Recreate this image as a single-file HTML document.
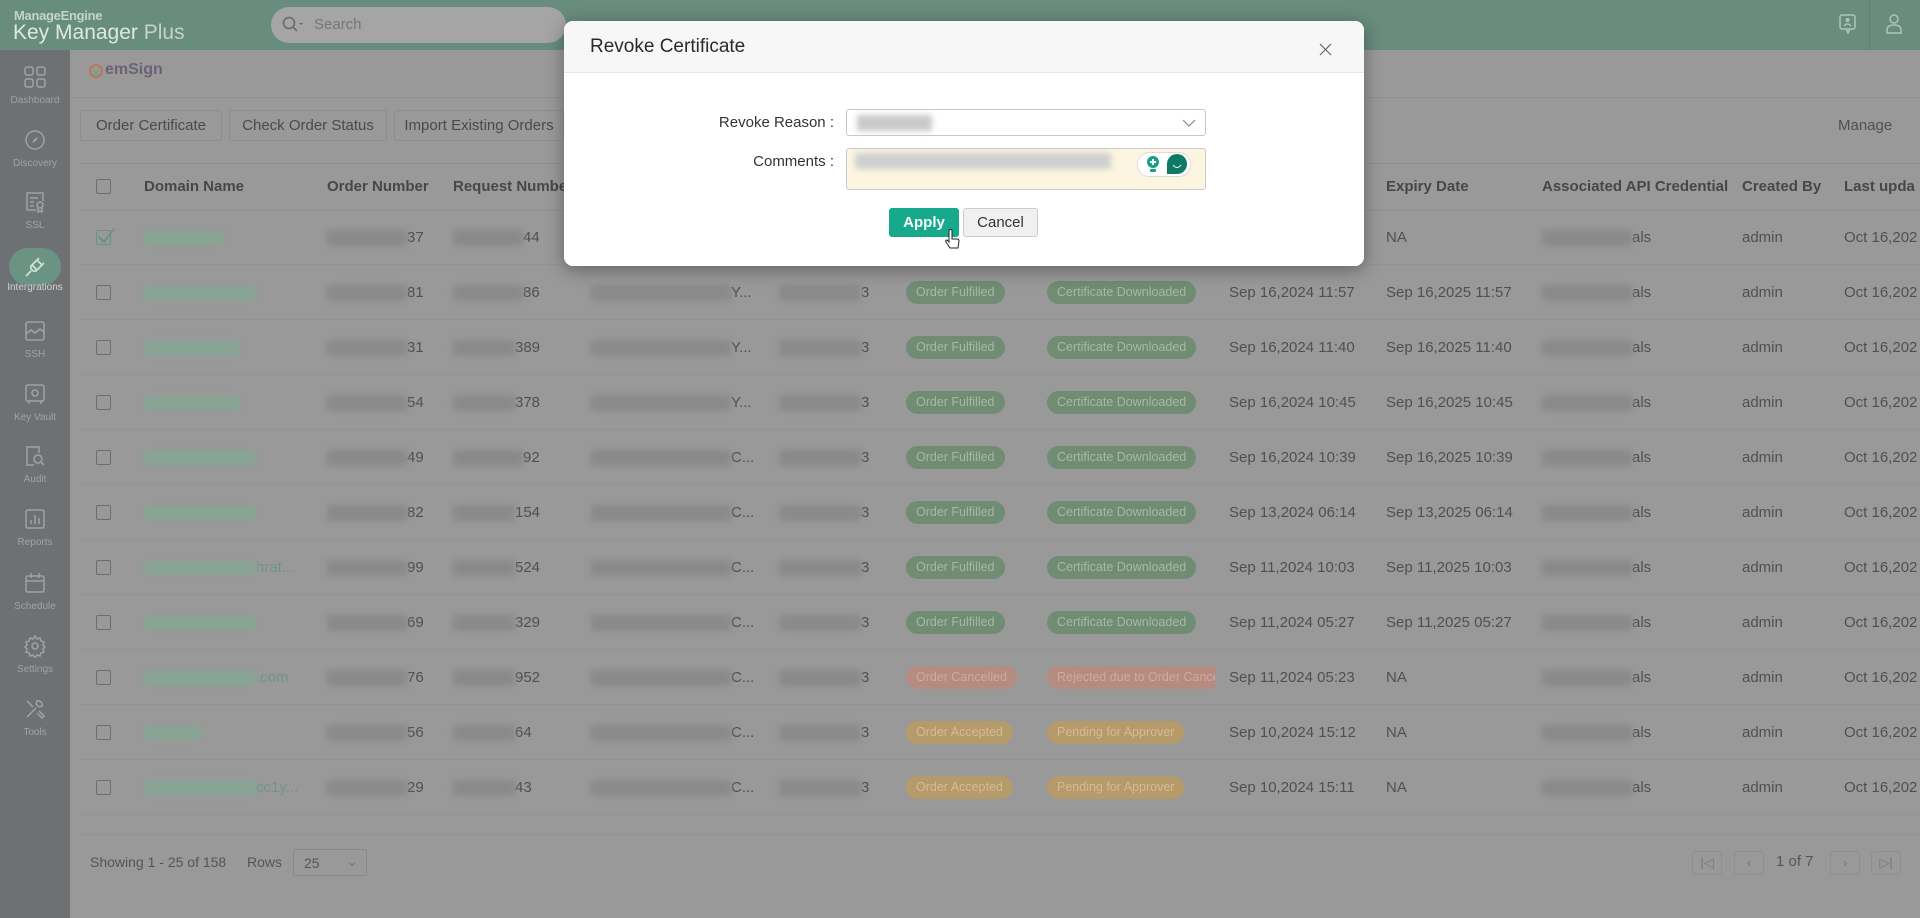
<!DOCTYPE html>
<html><head><meta charset="utf-8"><style>
*{margin:0;padding:0;box-sizing:border-box}
body{width:1920px;height:918px;overflow:hidden;background:#999;font-family:"Liberation Sans",sans-serif;position:relative;color:#505050}
.a{position:absolute}
#hdr{left:0;top:0;width:1920px;height:50px;background:#688c7e}
#side{left:0;top:50px;width:70px;height:868px;background:#6d7173}
.si{position:absolute;left:0;width:70px;text-align:center;font-size:10px;color:#9ea3a5}
.si svg{display:block;margin:0 auto 6px}
.btn{position:absolute;top:110px;height:31px;border:1px solid #8d8d8d;border-radius:3px;font-size:15px;color:#4a4a4a;line-height:29px;text-align:center}
.th{position:absolute;top:178px;font-size:15px;font-weight:bold;color:#474747}
.row{position:absolute;left:80px;width:1840px;height:55px;border-bottom:1px solid #939393}
.c{position:absolute;top:19px;font-size:15px;color:#505050;white-space:nowrap}
.bl{display:inline-block;height:16px;background:#8a8a8a;filter:blur(3px);vertical-align:middle}
.gl{display:inline-block;height:14px;background:#86a594;filter:blur(3px);vertical-align:middle}
.cb{position:absolute;left:16px;top:20px;width:15px;height:15px;border:1.5px solid #6d6d6d;border-radius:2px}
.bd{position:absolute;top:16px;height:23px;border-radius:12px;font-size:12.5px;line-height:23px;padding:0 10px;white-space:nowrap}
.g{background:#708c72;color:#a6b8a6}
.r{background:#b68b80;color:#d0aaa0}
.o{background:#b59a6a;color:#d3bd90}
</style></head><body>
<div id="hdr" class="a">
<div class="a" style="left:14px;top:8px;font-size:13px;font-weight:bold;color:#c4d3cc;letter-spacing:-0.3px">ManageEngine</div>
<div class="a" style="left:13px;top:21px;font-size:21px;color:#dfe8e4">Key Manager <span style="color:#c4d3cc">Plus</span></div>
<div class="a" style="left:271px;top:7px;width:295px;height:36px;border-radius:18px;background:#a5a5a5"></div>
<svg class="a" style="left:281px;top:15px" width="22" height="18"><circle cx="8" cy="8" r="5.5" fill="none" stroke="#666" stroke-width="1.5"/><path d="M12 12l4 4" stroke="#666" stroke-width="1.5"/><path d="M18 8l2 2 2-2z" fill="#666"/></svg>
<div class="a" style="left:314px;top:16px;font-size:15px;color:#767676">Search</div>
<svg class="a" style="left:1838px;top:13px" width="20" height="22"><rect x="2" y="2" width="15" height="14" rx="2" fill="none" stroke="#aec3ba" stroke-width="1.5"/><circle cx="9.5" cy="7" r="2" fill="#aec3ba"/><path d="M6 13q3.5-4 7 0M8 16l2 4 2-4" fill="none" stroke="#aec3ba" stroke-width="1.5"/></svg>
<div class="a" style="left:1869px;top:0;width:1px;height:50px;background:#627f73"></div>
<svg class="a" style="left:1885px;top:13px" width="18" height="22"><circle cx="9" cy="6" r="4" fill="none" stroke="#aec3ba" stroke-width="1.5"/><path d="M2 20v-3q0-5 7-5t7 5v3z" fill="none" stroke="#aec3ba" stroke-width="1.5"/></svg>
</div>
<div id="side" class="a">
<div class="si" style="top:15px"><svg width="24" height="24"><g fill="none" stroke="#9ea3a5" stroke-width="1.5"><rect x="2" y="2" width="8" height="8" rx="2"/><rect x="14" y="2" width="8" height="8" rx="2"/><rect x="2" y="14" width="8" height="8" rx="2"/><rect x="14" y="14" width="8" height="8" rx="2"/></g></svg>Dashboard</div>
<div class="si" style="top:78px"><svg width="24" height="24"><circle cx="12" cy="12" r="9" fill="none" stroke="#9ea3a5" stroke-width="1.5"/><path d="M15 9l-4 2-2 4 4-2z" fill="#9ea3a5"/></svg>Discovery</div>
<div class="si" style="top:140px"><svg width="24" height="24"><g fill="none" stroke="#9ea3a5" stroke-width="1.5"><path d="M13 20H4V3h16v8"/><path d="M7 8h8M7 12h4M7 16h4"/><circle cx="17" cy="15" r="3"/><path d="M15 18v4l2-1 2 1v-4"/></g></svg>SSL</div>
<div class="a" style="left:9px;top:198px;width:52px;height:37px;border-radius:19px;background:#6a9383"></div>
<svg class="a" style="left:23px;top:205px" width="24" height="24"><g fill="none" stroke="#cfe0d9" stroke-width="1.8"><path d="M3 21l5-5M9 10l5 5M14 5l2-2M19 10l2-2M8 11l6-6 5 5-6 6a4 4 0 01-5-5z"/></g></svg>
<div class="si" style="top:232px;color:#cdd3d4">Intergrations</div>
<div class="si" style="top:269px"><svg width="24" height="24"><g fill="none" stroke="#9ea3a5" stroke-width="1.5"><rect x="3" y="3" width="18" height="18" rx="2"/><path d="M3 15l5-4 4 3 5-4 4 3"/></g></svg>SSH</div>
<div class="si" style="top:332px"><svg width="24" height="24"><g fill="none" stroke="#9ea3a5" stroke-width="1.5"><rect x="3" y="3" width="18" height="16" rx="2"/><circle cx="12" cy="11" r="3"/><path d="M6 19v3M18 19v3"/></g></svg>Key Vault</div>
<div class="si" style="top:394px"><svg width="24" height="24"><g fill="none" stroke="#9ea3a5" stroke-width="1.5"><path d="M11 21H4V3h12v6"/><circle cx="15" cy="15" r="4"/><path d="M18 18l3 3"/></g></svg>Audit</div>
<div class="si" style="top:457px"><svg width="24" height="24"><g fill="none" stroke="#9ea3a5" stroke-width="1.5"><rect x="3" y="3" width="18" height="18" rx="2"/><path d="M8 17v-4M12 17V8M16 17v-6"/></g></svg>Reports</div>
<div class="si" style="top:521px"><svg width="24" height="24"><g fill="none" stroke="#9ea3a5" stroke-width="1.5"><rect x="3" y="5" width="18" height="16" rx="2"/><path d="M3 10h18M8 2v5M16 2v5"/></g></svg>Schedule</div>
<div class="si" style="top:584px"><svg width="24" height="24"><g fill="none" stroke="#9ea3a5" stroke-width="1.5"><circle cx="12" cy="12" r="3"/><path d="M12 2l2 3 3-1 1 3 3 1-1 3 2 2-2 2 1 3-3 1-1 3-3-1-2 3-2-3-3 1-1-3-3-1 1-3-2-2 2-2-1-3 3-1 1-3 3 1z"/></g></svg>Settings</div>
<div class="si" style="top:647px"><svg width="24" height="24"><g fill="none" stroke="#9ea3a5" stroke-width="1.5"><path d="M4 20l9-9M14 4a4 4 0 015 5l-3 1-3-3zM4 4l6 6M16 14l5 5-2 2-5-5"/></g></svg>Tools</div>
</div>
<svg class="a" style="left:89px;top:63px" width="14" height="16"><circle cx="7" cy="8" r="6" fill="none" stroke="#b07a5a" stroke-width="2"/><rect x="4" y="7" width="6" height="5" fill="#8a9a7a"/></svg>
<div class="a" style="left:105px;top:61px;font-size:16px;font-weight:bold;color:#6b6278">emSign</div>
<div class="a" style="left:70px;top:97px;width:1850px;height:1px;background:#909090"></div>
<div class="btn" style="left:80px;width:142px">Order Certificate</div>
<div class="btn" style="left:229px;width:158px">Check Order Status</div>
<div class="btn" style="left:394px;width:170px">Import Existing Orders</div>
<div class="a" style="left:1838px;top:117px;font-size:15px;color:#505050">Manage</div>
<div class="a" style="left:80px;top:163px;width:1840px;height:48px;border-top:1px solid #909090;border-bottom:1px solid #909090"></div>
<div class="a" style="left:96px;top:179px;width:15px;height:15px;border:1.5px solid #6d6d6d;border-radius:2px"></div>
<div class="th" style="left:144px">Domain Name</div>
<div class="th" style="left:327px">Order Number</div>
<div class="th" style="left:453px">Request Number</div>
<div class="th" style="left:1386px">Expiry Date</div>
<div class="th" style="left:1542px">Associated API Credential</div>
<div class="th" style="left:1742px">Created By</div>
<div class="th" style="left:1844px">Last upda</div>

<div class="row" style="top:210px"><div class="cb" style="border-color:#6a9480"></div><svg class="a" style="left:16px;top:17px" width="20" height="20"><path d="M3 10l5 5 10-13" fill="none" stroke="#6a9480" stroke-width="2"/></svg><div class="c" style="left:64px"><span class="gl" style="width:80px"></span></div><div class="c" style="left:247px"><span class="bl" style="width:80px"></span>37</div><div class="c" style="left:373px"><span class="bl" style="width:70px"></span>44</div><div class="c" style="left:1306px">NA</div><div class="c" style="left:1462px"><span class="bl" style="width:90px"></span>als</div><div class="c" style="left:1662px">admin</div><div class="c" style="left:1764px">Oct 16,202</div></div>

<div class="row" style="top:265px"><div class="cb"></div><div class="c" style="left:64px"><span class="gl" style="width:112px"></span></div><div class="c" style="left:247px"><span class="bl" style="width:80px"></span>81</div><div class="c" style="left:373px"><span class="bl" style="width:70px"></span>86</div><div class="c" style="left:511px"><span class="bl" style="width:140px"></span>Y...</div><div class="c" style="left:699px"><span class="bl" style="width:82px"></span>3</div><div class="bd g" style="left:826px">Order Fulfilled</div><div class="bd g" style="left:967px">Certificate Downloaded</div><div class="c" style="left:1149px">Sep 16,2024 11:57</div><div class="c" style="left:1306px">Sep 16,2025 11:57</div><div class="c" style="left:1462px"><span class="bl" style="width:90px"></span>als</div><div class="c" style="left:1662px">admin</div><div class="c" style="left:1764px">Oct 16,202</div></div>

<div class="row" style="top:320px"><div class="cb"></div><div class="c" style="left:64px"><span class="gl" style="width:96px"></span></div><div class="c" style="left:247px"><span class="bl" style="width:80px"></span>31</div><div class="c" style="left:373px"><span class="bl" style="width:62px"></span>389</div><div class="c" style="left:511px"><span class="bl" style="width:140px"></span>Y...</div><div class="c" style="left:699px"><span class="bl" style="width:82px"></span>3</div><div class="bd g" style="left:826px">Order Fulfilled</div><div class="bd g" style="left:967px">Certificate Downloaded</div><div class="c" style="left:1149px">Sep 16,2024 11:40</div><div class="c" style="left:1306px">Sep 16,2025 11:40</div><div class="c" style="left:1462px"><span class="bl" style="width:90px"></span>als</div><div class="c" style="left:1662px">admin</div><div class="c" style="left:1764px">Oct 16,202</div></div>

<div class="row" style="top:375px"><div class="cb"></div><div class="c" style="left:64px"><span class="gl" style="width:96px"></span></div><div class="c" style="left:247px"><span class="bl" style="width:80px"></span>54</div><div class="c" style="left:373px"><span class="bl" style="width:62px"></span>378</div><div class="c" style="left:511px"><span class="bl" style="width:140px"></span>Y...</div><div class="c" style="left:699px"><span class="bl" style="width:82px"></span>3</div><div class="bd g" style="left:826px">Order Fulfilled</div><div class="bd g" style="left:967px">Certificate Downloaded</div><div class="c" style="left:1149px">Sep 16,2024 10:45</div><div class="c" style="left:1306px">Sep 16,2025 10:45</div><div class="c" style="left:1462px"><span class="bl" style="width:90px"></span>als</div><div class="c" style="left:1662px">admin</div><div class="c" style="left:1764px">Oct 16,202</div></div>

<div class="row" style="top:430px"><div class="cb"></div><div class="c" style="left:64px"><span class="gl" style="width:112px"></span></div><div class="c" style="left:247px"><span class="bl" style="width:80px"></span>49</div><div class="c" style="left:373px"><span class="bl" style="width:70px"></span>92</div><div class="c" style="left:511px"><span class="bl" style="width:140px"></span>C...</div><div class="c" style="left:699px"><span class="bl" style="width:82px"></span>3</div><div class="bd g" style="left:826px">Order Fulfilled</div><div class="bd g" style="left:967px">Certificate Downloaded</div><div class="c" style="left:1149px">Sep 16,2024 10:39</div><div class="c" style="left:1306px">Sep 16,2025 10:39</div><div class="c" style="left:1462px"><span class="bl" style="width:90px"></span>als</div><div class="c" style="left:1662px">admin</div><div class="c" style="left:1764px">Oct 16,202</div></div>

<div class="row" style="top:485px"><div class="cb"></div><div class="c" style="left:64px"><span class="gl" style="width:112px"></span></div><div class="c" style="left:247px"><span class="bl" style="width:80px"></span>82</div><div class="c" style="left:373px"><span class="bl" style="width:62px"></span>154</div><div class="c" style="left:511px"><span class="bl" style="width:140px"></span>C...</div><div class="c" style="left:699px"><span class="bl" style="width:82px"></span>3</div><div class="bd g" style="left:826px">Order Fulfilled</div><div class="bd g" style="left:967px">Certificate Downloaded</div><div class="c" style="left:1149px">Sep 13,2024 06:14</div><div class="c" style="left:1306px">Sep 13,2025 06:14</div><div class="c" style="left:1462px"><span class="bl" style="width:90px"></span>als</div><div class="c" style="left:1662px">admin</div><div class="c" style="left:1764px">Oct 16,202</div></div>

<div class="row" style="top:540px"><div class="cb"></div><div class="c" style="left:64px"><span class="gl" style="width:112px"></span><span style="color:#6f9684">hrat...</span></div><div class="c" style="left:247px"><span class="bl" style="width:80px"></span>99</div><div class="c" style="left:373px"><span class="bl" style="width:62px"></span>524</div><div class="c" style="left:511px"><span class="bl" style="width:140px"></span>C...</div><div class="c" style="left:699px"><span class="bl" style="width:82px"></span>3</div><div class="bd g" style="left:826px">Order Fulfilled</div><div class="bd g" style="left:967px">Certificate Downloaded</div><div class="c" style="left:1149px">Sep 11,2024 10:03</div><div class="c" style="left:1306px">Sep 11,2025 10:03</div><div class="c" style="left:1462px"><span class="bl" style="width:90px"></span>als</div><div class="c" style="left:1662px">admin</div><div class="c" style="left:1764px">Oct 16,202</div></div>

<div class="row" style="top:595px"><div class="cb"></div><div class="c" style="left:64px"><span class="gl" style="width:112px"></span></div><div class="c" style="left:247px"><span class="bl" style="width:80px"></span>69</div><div class="c" style="left:373px"><span class="bl" style="width:62px"></span>329</div><div class="c" style="left:511px"><span class="bl" style="width:140px"></span>C...</div><div class="c" style="left:699px"><span class="bl" style="width:82px"></span>3</div><div class="bd g" style="left:826px">Order Fulfilled</div><div class="bd g" style="left:967px">Certificate Downloaded</div><div class="c" style="left:1149px">Sep 11,2024 05:27</div><div class="c" style="left:1306px">Sep 11,2025 05:27</div><div class="c" style="left:1462px"><span class="bl" style="width:90px"></span>als</div><div class="c" style="left:1662px">admin</div><div class="c" style="left:1764px">Oct 16,202</div></div>

<div class="row" style="top:650px"><div class="cb"></div><div class="c" style="left:64px"><span class="gl" style="width:112px"></span><span style="color:#6f9684">.com</span></div><div class="c" style="left:247px"><span class="bl" style="width:80px"></span>76</div><div class="c" style="left:373px"><span class="bl" style="width:62px"></span>952</div><div class="c" style="left:511px"><span class="bl" style="width:140px"></span>C...</div><div class="c" style="left:699px"><span class="bl" style="width:82px"></span>3</div><div class="bd r" style="left:826px">Order Cancelled</div><div class="bd r" style="left:967px;width:168px;overflow:hidden;border-radius:12px 0 0 12px">Rejected due to Order Cancel</div><div class="c" style="left:1149px">Sep 11,2024 05:23</div><div class="c" style="left:1306px">NA</div><div class="c" style="left:1462px"><span class="bl" style="width:90px"></span>als</div><div class="c" style="left:1662px">admin</div><div class="c" style="left:1764px">Oct 16,202</div></div>

<div class="row" style="top:705px"><div class="cb"></div><div class="c" style="left:64px"><span class="gl" style="width:58px"></span></div><div class="c" style="left:247px"><span class="bl" style="width:80px"></span>56</div><div class="c" style="left:373px"><span class="bl" style="width:62px"></span>64</div><div class="c" style="left:511px"><span class="bl" style="width:140px"></span>C...</div><div class="c" style="left:699px"><span class="bl" style="width:82px"></span>3</div><div class="bd o" style="left:826px">Order Accepted</div><div class="bd o" style="left:967px">Pending for Approver</div><div class="c" style="left:1149px">Sep 10,2024 15:12</div><div class="c" style="left:1306px">NA</div><div class="c" style="left:1462px"><span class="bl" style="width:90px"></span>als</div><div class="c" style="left:1662px">admin</div><div class="c" style="left:1764px">Oct 16,202</div></div>

<div class="row" style="top:760px"><div class="cb"></div><div class="c" style="left:64px"><span class="gl" style="width:112px"></span><span style="color:#6f9684">cc1y...</span></div><div class="c" style="left:247px"><span class="bl" style="width:80px"></span>29</div><div class="c" style="left:373px"><span class="bl" style="width:62px"></span>43</div><div class="c" style="left:511px"><span class="bl" style="width:140px"></span>C...</div><div class="c" style="left:699px"><span class="bl" style="width:82px"></span>3</div><div class="bd o" style="left:826px">Order Accepted</div><div class="bd o" style="left:967px">Pending for Approver</div><div class="c" style="left:1149px">Sep 10,2024 15:11</div><div class="c" style="left:1306px">NA</div><div class="c" style="left:1462px"><span class="bl" style="width:90px"></span>als</div><div class="c" style="left:1662px">admin</div><div class="c" style="left:1764px">Oct 16,202</div></div>

<div class="a" style="left:80px;top:834px;width:1840px;height:1px;background:#939393"></div>
<div class="a" style="left:90px;top:854px;font-size:14px;color:#555">Showing 1 - 25 of 158</div>
<div class="a" style="left:247px;top:854px;font-size:14px;color:#555">Rows</div>
<div class="a" style="left:293px;top:849px;width:74px;height:27px;border:1px solid #8a8a8a;border-radius:2px;font-size:14px;color:#555;padding:5px 10px">25<span style="position:absolute;right:8px;top:3px;color:#777">&#8964;</span></div>
<div class="a" style="left:1692px;top:851px;width:30px;height:24px;border:1px solid #8f8f8f;border-radius:4px;font-size:13px;color:#777;text-align:center;line-height:22px">|&#9665;</div>
<div class="a" style="left:1734px;top:851px;width:30px;height:24px;border:1px solid #8f8f8f;border-radius:4px;font-size:13px;color:#777;text-align:center;line-height:22px">&lsaquo;</div>
<div class="a" style="left:1776px;top:853px;font-size:15px;color:#555">1 of 7</div>
<div class="a" style="left:1830px;top:851px;width:30px;height:24px;border:1px solid #8f8f8f;border-radius:4px;font-size:13px;color:#777;text-align:center;line-height:22px">&rsaquo;</div>
<div class="a" style="left:1871px;top:851px;width:30px;height:24px;border:1px solid #8f8f8f;border-radius:4px;font-size:13px;color:#777;text-align:center;line-height:22px">&#9655;|</div>

<!-- dialog -->
<div class="a" style="left:564px;top:21px;width:800px;height:245px;background:#fff;border-radius:9px;box-shadow:0 4px 18px rgba(0,0,0,.35);overflow:hidden">
<div class="a" style="left:0;top:0;width:800px;height:52px;background:#f7f7f7;border-bottom:1px solid #e6e6e6"></div>
<div class="a" style="left:26px;top:15px;font-size:19px;color:#2a2a2a">Revoke Certificate</div>
<svg class="a" style="left:755px;top:22px" width="13" height="13"><path d="M1 1l11 11M12 1L1 12" stroke="#666" stroke-width="1.2"/></svg>
<div class="a" style="left:100px;top:93px;width:170px;text-align:right;font-size:15px;color:#333;white-space:nowrap">Revoke Reason :</div>
<div class="a" style="left:282px;top:88px;width:360px;height:27px;border:1px solid #c8c8c8;border-radius:3px"><span class="bl" style="position:absolute;left:10px;top:5px;width:75px;background:#c9c9c9"></span><svg class="a" style="left:335px;top:8px" width="14" height="10"><path d="M1 2l6 6 6-6" fill="none" stroke="#888" stroke-width="1.2"/></svg></div>
<div class="a" style="left:100px;top:132px;width:170px;text-align:right;font-size:15px;color:#333;white-space:nowrap">Comments :</div>
<div class="a" style="left:282px;top:127px;width:360px;height:42px;border:1px solid #c8c8c8;border-radius:3px;background:#fcf6e0"><span class="bl" style="position:absolute;left:8px;top:4px;width:256px;background:#cfcfcf"></span>
<div class="a" style="left:290px;top:3px;width:54px;height:25px;border-radius:12px;background:#fff;border:1px solid #ddd"></div>
<svg class="a" style="left:298px;top:6px" width="16" height="20"><circle cx="8" cy="7" r="6" fill="#16a085"/><path d="M8 4v6M5 7h6" stroke="#fff" stroke-width="2"/><rect x="5" y="14" width="6" height="3" rx="1" fill="#16a085"/></svg>
<svg class="a" style="left:319px;top:4px" width="22" height="22"><path d="M11 1a10 10 0 110 20H1V11A10 10 0 0111 1z" fill="#0e7a63"/><path d="M7 12q4 5 8 0" fill="none" stroke="#fff" stroke-width="1"/></svg></div>
<div class="a" style="left:325px;top:187px;width:70px;height:29px;border-radius:3px;background:#17a98b;color:#fff;font-size:15px;font-weight:bold;text-align:center;line-height:29px">Apply</div>
<div class="a" style="left:399px;top:187px;width:75px;height:29px;border-radius:3px;background:#f0f0f0;border:1px solid #ccc;color:#333;font-size:15px;text-align:center;line-height:27px">Cancel</div>
<svg class="a" style="left:381px;top:208px" width="16" height="22"><path d="M4 1v12l-2-2q-2 0-1 2l4 6h8l1-7q0-2-2-2h-5V1q-1-1-3 0z" fill="#fff" stroke="#222" stroke-width="1"/></svg>
</div>
</body></html>
